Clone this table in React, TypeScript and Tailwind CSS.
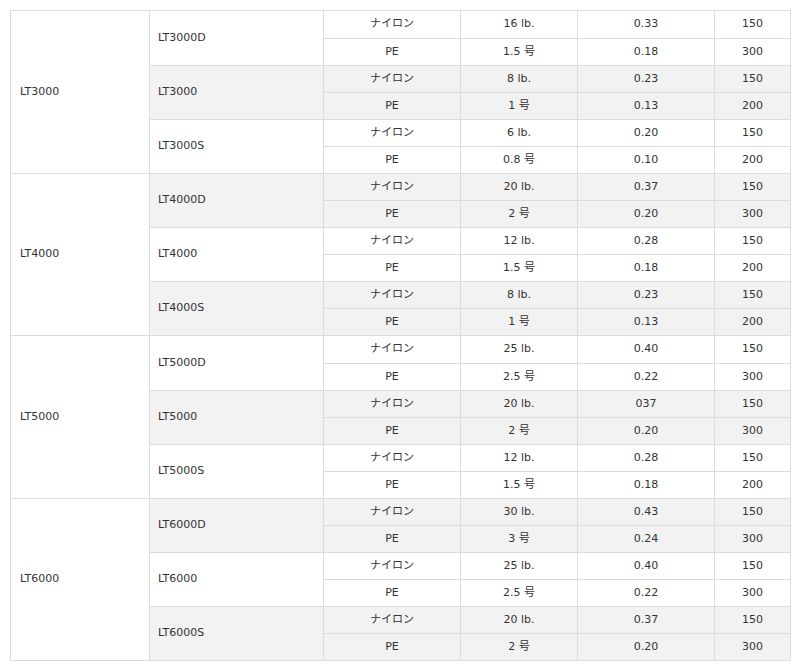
import React from 'react';

type Spec = { line: string; strength: string; dia: string; len: string };
type Model = { name: string; specs: Spec[] };
type Group = { name: string; models: Model[] };

const nylonPe = (lb: string, nd: string, nl: string, go: string, pd: string, pl: string): Spec[] => [
  { line: 'ナイロン', strength: `${lb} lb.`, dia: nd, len: nl },
  { line: 'PE', strength: `${go} 号`, dia: pd, len: pl },
];

const groups: Group[] = [
  {
    name: 'LT3000',
    models: [
      { name: 'LT3000D', specs: nylonPe('16', '0.33', '150', '1.5', '0.18', '300') },
      { name: 'LT3000', specs: nylonPe('8', '0.23', '150', '1', '0.13', '200') },
      { name: 'LT3000S', specs: nylonPe('6', '0.20', '150', '0.8', '0.10', '200') },
    ],
  },
  {
    name: 'LT4000',
    models: [
      { name: 'LT4000D', specs: nylonPe('20', '0.37', '150', '2', '0.20', '300') },
      { name: 'LT4000', specs: nylonPe('12', '0.28', '150', '1.5', '0.18', '200') },
      { name: 'LT4000S', specs: nylonPe('8', '0.23', '150', '1', '0.13', '200') },
    ],
  },
  {
    name: 'LT5000',
    models: [
      { name: 'LT5000D', specs: nylonPe('25', '0.40', '150', '2.5', '0.22', '300') },
      { name: 'LT5000', specs: nylonPe('20', '037', '150', '2', '0.20', '300') },
      { name: 'LT5000S', specs: nylonPe('12', '0.28', '150', '1.5', '0.18', '200') },
    ],
  },
  {
    name: 'LT6000',
    models: [
      { name: 'LT6000D', specs: nylonPe('30', '0.43', '150', '3', '0.24', '300') },
      { name: 'LT6000', specs: nylonPe('25', '0.40', '150', '2.5', '0.22', '300') },
      { name: 'LT6000S', specs: nylonPe('20', '0.37', '150', '2', '0.20', '300') },
    ],
  },
];

const cell = 'border border-[#dcdcdc] p-0 align-middle';

const App = () => {
  return (
    <div className="bg-white min-h-screen p-[10px] text-[11px] text-[#333]" style={{ fontFamily: '"DejaVu Sans", "Noto Sans CJK JP", sans-serif' }}>
      <table className="w-[780px] table-fixed border-collapse">
        <colgroup>
          <col className="w-[139px]" />
          <col className="w-[174px]" />
          <col className="w-[137px]" />
          <col className="w-[117px]" />
          <col className="w-[137px]" />
          <col className="w-[76px]" />
        </colgroup>
        <tbody>
          {groups.map((g, gi) =>
            g.models.map((m, mi) =>
              m.specs.map((s, si) => {
                // every other model is shaded; the series column stays white
                const shade = (gi * 3 + mi) % 2 === 1 ? 'bg-[#f2f2f2]' : 'bg-white';
                const h = mi === 0 && si === 0 && gi % 2 === 0 ? 'h-[28px]' : 'h-[27px]';
                return (
                  <tr key={`${m.name}-${si}`} className={h}>
                    {mi === 0 && si === 0 && (
                      <td rowSpan={6} className={`${cell} bg-white pl-[9px] text-left`}>
                        {g.name}
                      </td>
                    )}
                    {si === 0 && (
                      <td rowSpan={2} className={`${cell} ${shade} pl-[8px] text-left`}>
                        {m.name}
                      </td>
                    )}
                    <td className={`${cell} ${shade} text-center`}>{s.line}</td>
                    <td className={`${cell} ${shade} text-center`}>{s.strength}</td>
                    <td className={`${cell} ${shade} text-center`}>{s.dia}</td>
                    <td className={`${cell} ${shade} text-center`}>{s.len}</td>
                  </tr>
                );
              })
            )
          )}
        </tbody>
      </table>
    </div>
  );
};

export default App;
